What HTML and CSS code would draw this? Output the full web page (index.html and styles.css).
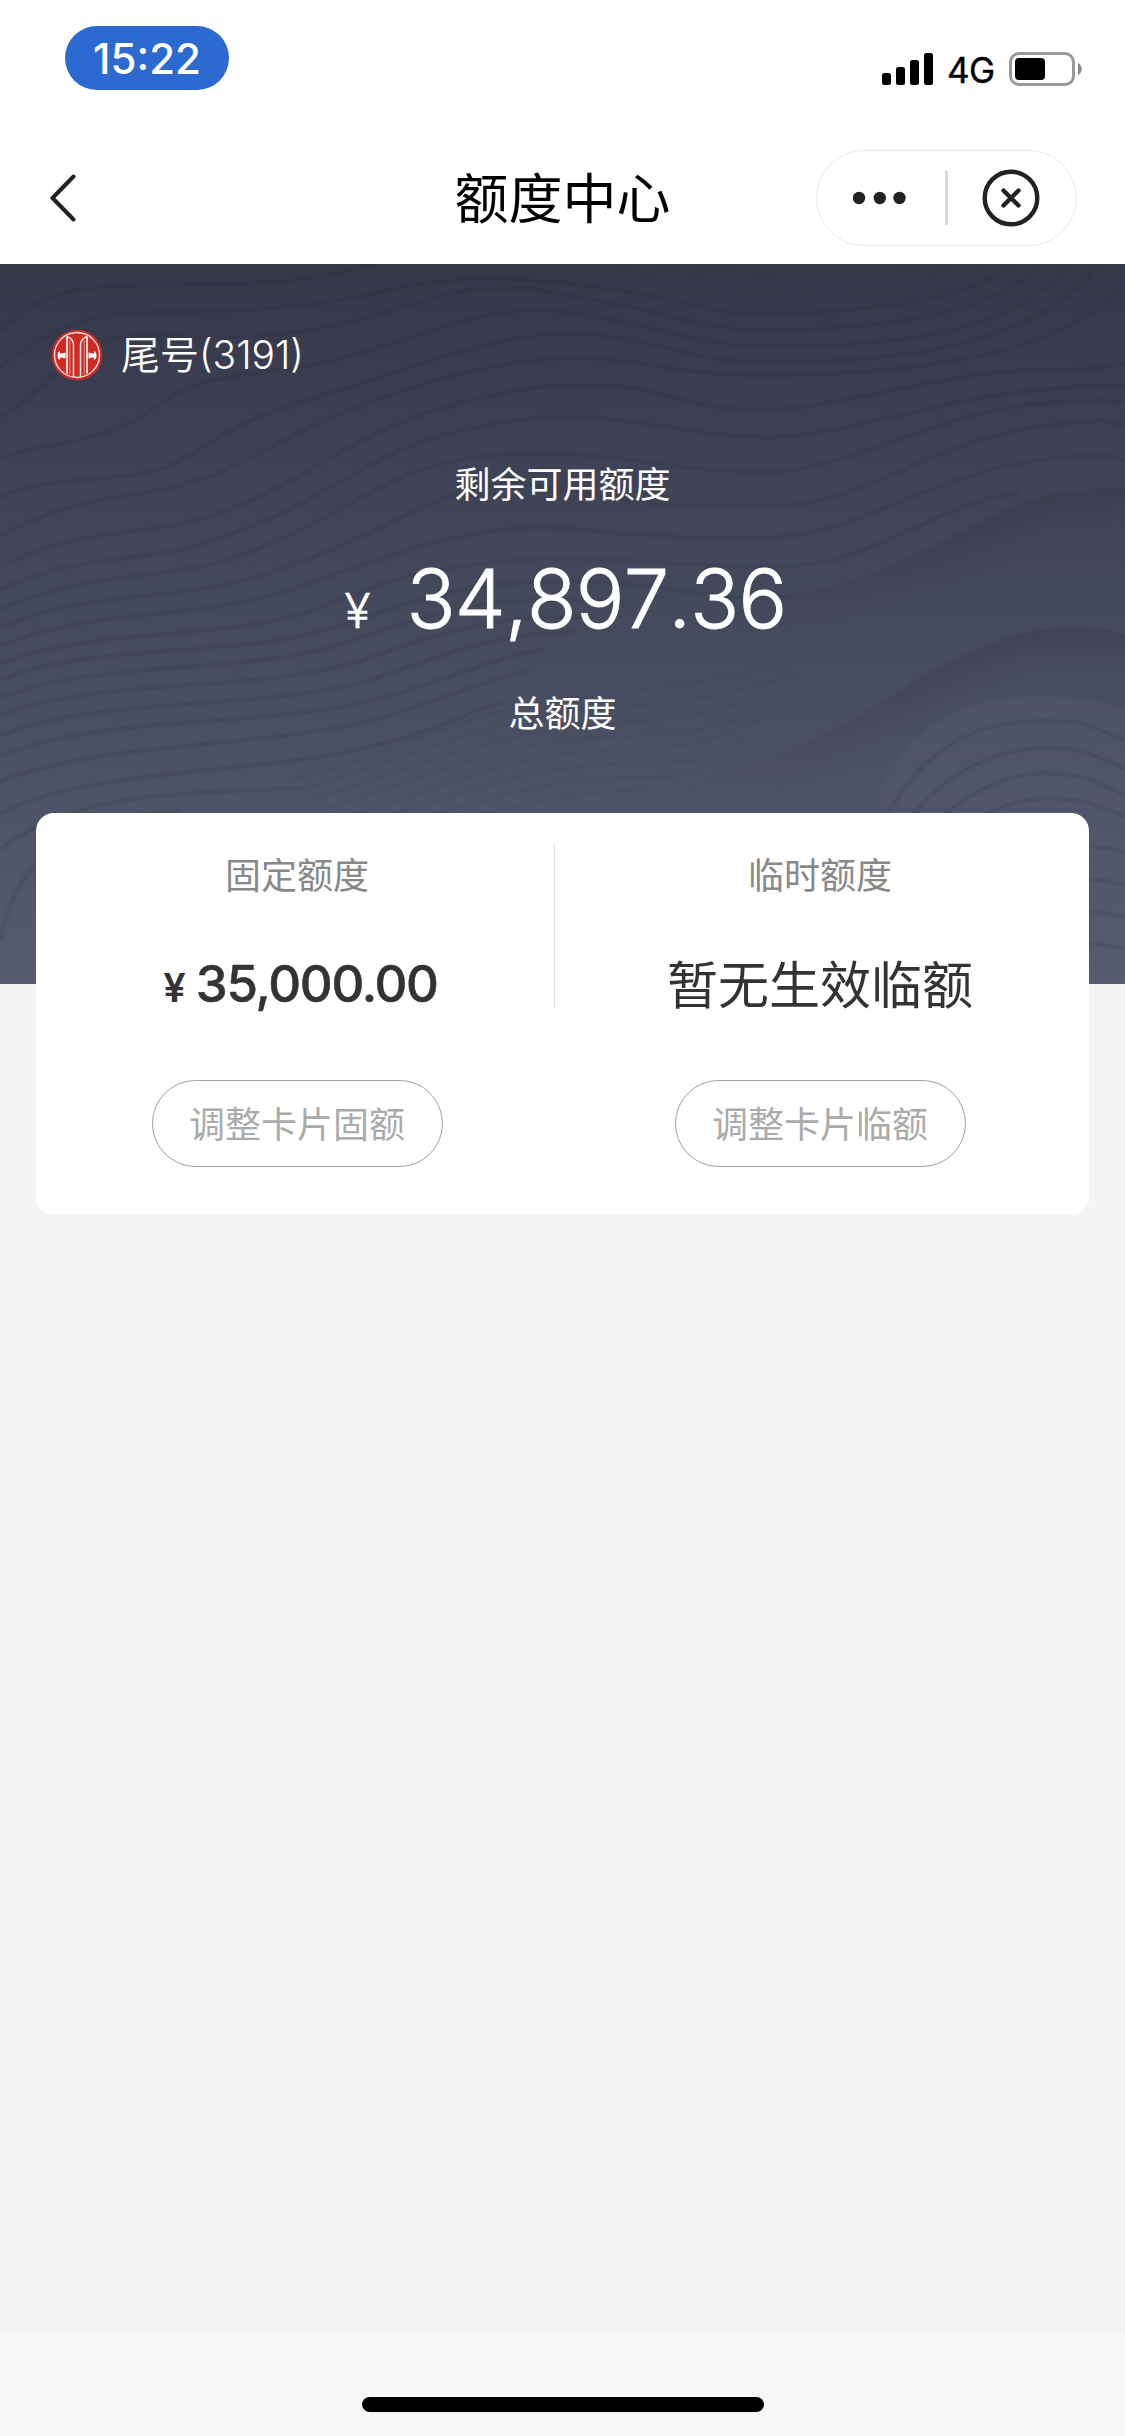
FILE: index.html
```html
<!DOCTYPE html>
<html lang="zh-CN">
<head>
<meta charset="utf-8">
<title>额度中心</title>
<link rel="stylesheet" href="styles.css">
</head>
<body>
<header class="top">
  <div class="status">
    <div class="time">15:22</div>
    <div class="status-right">
      <svg class="signal" viewBox="0 0 51 32"><rect y="20" width="9" height="12" rx="2.5"/><rect x="14" y="14" width="9" height="18" rx="2.5"/><rect x="28" y="7" width="9" height="25" rx="2.5"/><rect x="42" width="9" height="32" rx="2.5"/></svg>
      <span class="network">4G</span>
      <svg class="battery" viewBox="0 0 74 34"><rect x="1.5" y="1.5" width="63" height="31" rx="8.5" fill="none" stroke="#999" stroke-width="3"/><rect x="6" y="6" width="30" height="22" rx="4"/><path d="M69 11c5 2 5 10 0 12z" fill="#888"/></svg>
    </div>
  </div>
  <div class="nav">
    <svg class="back" viewBox="0 0 28 50"><path d="M25.500 3.500 4.500 25l21 21.500" fill="none" stroke="#222" stroke-width="4" stroke-linecap="round" stroke-linejoin="round"/></svg>
    <h1 class="title">额度中心</h1>
    <div class="capsule">
      <svg class="dots" viewBox="0 0 54 14"><g fill="#222"><circle cx="6" cy="7" r="6.2"/><circle cx="26.8" cy="7" r="6.2"/><circle cx="46.5" cy="7" r="6.2"/></g></svg>
      <span class="capsule-line"></span>
      <svg class="close" viewBox="0 0 58 58"><g fill="none" stroke="#222"><circle cx="29" cy="29" r="26.3" stroke-width="4.4"/><path d="m21.500 21.500 15 15m0-15-15 15" stroke-width="4.4" stroke-linecap="round"/></g></svg>
    </div>
  </div>
</header>

<main>
  <section class="hero">
    <svg class="waves" viewBox="0 11 1568 2016" preserveAspectRatio="none">
      <defs>
        <clipPath id="far"><path d="M1000 965C1180 930 1250 850 1330 770S1450 635 1568 640V2027H1000z"/></clipPath>
        <clipPath id="near"><path d="M900 1500C1080 1410 1180 1300 1256 1201S1450 980 1568 1048V2027H900z"/></clipPath>
        <linearGradient id="shade" gradientUnits="userSpaceOnUse" x1="960" y1="0" x2="1400" y2="0"><stop offset="0" stop-color="#30333f" stop-opacity="0"/><stop offset="1" stop-color="#30333f" stop-opacity=".26"/></linearGradient>
        <linearGradient id="hump" x1="0" y1="0" x2="0" y2="1"><stop offset="0" stop-color="#6b7288" stop-opacity=".14"/><stop offset="1" stop-color="#6b7288" stop-opacity=".03"/></linearGradient>
      </defs>
      <g clip-path="url(#far)"><path class="shade" stroke="url(#shade)" d="M1000 965C1180 930 1250 850 1330 770S1450 635 1568 640H1700"/></g>
      <g clip-path="url(#near)"><path class="shade" stroke="url(#shade)" d="M900 1500C1080 1410 1180 1300 1256 1201S1450 980 1568 1048L1700 1120"/></g>
      <path class="hump" fill="url(#hump)" d="M1216 1620C1215 1400 1300 1225 1440 1221C1490 1218 1530 1235 1600 1270V2040H1216z"/>
      <g class="lines">
        <path d="M0 200C50 100 90 75 200 70S400 80 520 11"/>
        <path d="M0 300C70 190 120 145 220 145S420 140 540 85S740 50 850 80S980 150 1060 150S1350 130 1410 11"/>
        <path d="M0 440C90 340 100 190 230 210S460 200 580 120S760 90 850 120S980 195 1060 195S1370 190 1450 11"/>
        <path d="M0 555C80 500 140 520 210 420S320 330 420 300S640 145 740 140S960 240 1060 240S1400 250 1490 11"/>
        <path d="M0 665C90 580 190 650 270 540S400 410 480 360S700 200 800 205S960 285 1060 285S1430 290 1530 11"/>
        <path d="M0 775C90 660 190 670 270 620S400 490 480 425S720 255 830 275S960 323 1060 323S1460 310 1560 80"/>
        <path d="M0 860C90 760 190 770 270 730S410 610 490 520S720 335 836 350S960 419 1060 419S1330 310 1430 310S1530 300 1568 290"/>
        <path d="M0 925C100 820 200 850 290 790S440 660 520 570S730 425 836 443S980 496 1070 496S1320 390 1420 370S1530 350 1568 350"/>
        <path d="M0 980C110 870 230 900 330 830S500 660 570 600S740 530 836 550S980 596 1080 592S1320 420 1450 402S1530 400 1568 400"/>
        <path d="M0 1030C120 920 250 960 370 880S550 720 630 660S760 635 850 665S1000 690 1100 685S1310 500 1450 466S1530 463 1568 463"/>
        <path d="M0 1080C130 970 280 1010 410 920S590 790 680 760S830 765 900 770S1020 790 1110 770S1320 590 1450 560S1530 558 1568 560"/>
        <path d="M0 1130C140 1020 330 1070 450 970S620 860 720 840S1000 870 1110 856S1310 680 1420 650"/>
        <path d="M0 1175C140 1065 340 1120 480 1020S680 900 800 900S1000 960 1100 942"/>
        <path d="M0 1225C150 1110 350 1170 500 1060S730 940 870 960"/>
        <path d="M0 1275C150 1160 370 1220 520 1110S720 1000 830 1000"/>
        <path d="M0 1330C160 1210 390 1270 540 1160S720 1050 800 1040"/>
        <path d="M0 1390C160 1260 390 1320 560 1210S700 1110 760 1090"/>
        <path d="M0 1460C150 1340 400 1370 550 1270S670 1180 740 1150"/>
        <path d="M0 1550C130 1420 350 1440 500 1370S620 1280 700 1240"/>
        <path d="M0 1650C100 1490 260 1490 420 1480"/>
        <path d="M0 1900C30 1650 100 1570 250 1540"/>
        <path d="M1235 1560C1290 1350 1370 1290 1450 1290S1520 1310 1568 1345"/>
        <path d="M1270 1560C1320 1430 1390 1370 1450 1367S1530 1390 1568 1425M1310 1560C1360 1480 1410 1435 1460 1437S1530 1460 1568 1500M1370 1560C1420 1490 1500 1490 1568 1560"/>
        <path d="M1500 1640Q1540 1640 1568 1660M1500 1740Q1540 1730 1568 1750M1500 1830Q1540 1820 1568 1840M1500 1920Q1540 1910 1568 1930"/>
      </g>
      <g class="fine">
        <path d="M860 20C970 90 1080 120 1180 115S1340 80 1370 11M910 11C1000 70 1100 90 1180 85S1300 60 1325 11M965 11C1060 50 1120 60 1180 55S1260 30 1280 11"/>
        <path d="M400 1460C560 1380 640 1260 820 1220S1020 1170 1110 1120M415 1485C570 1400 660 1290 830 1260S1020 1210 1110 1160M430 1510C580 1430 680 1320 840 1300S1020 1240 1100 1200M455 1535C600 1450 700 1340 850 1335S1010 1290 1080 1250M480 1560C620 1480 700 1380 860 1372S1010 1310 1060 1290M530 1560C660 1490 740 1410 880 1410S1000 1370 1040 1340M590 1560C700 1500 770 1450 880 1450S960 1420 1000 1400M660 1560C740 1510 820 1490 900 1480"/>
      </g>
    </svg>
    <div class="bank">
      <svg class="bank-logo" viewBox="0 0 52 52"><circle cx="26" cy="26" r="25.3" fill="#cf2a24"/><g fill="none" stroke="#fff" stroke-opacity=".88"><circle cx="26" cy="26" r="22.500" stroke-width="1.3"/><path d="M16 7.500v37M36 7.500v37" stroke-width="1.8"/><path d="M16 7.500q6.500 2 6.500 9v31.500M36 7.500q-6.500 2-6.500 9v31.500" stroke-width="1.500"/><path d="M18.800 11v35M33.200 11v35" stroke-width="1" stroke-opacity=".5"/></g><path d="M9 22v2.500q3 0 5.500-1v6q-2.500-1-5.500-1V31q-2.500-1-2.500-4.500T9 22zm34 0v2.500q-3 0-5.500-1v6q2.500-1 5.500-1V31q2.500-1 2.500-4.500T43 22z" fill="#fff"/></svg>
      <span>尾号(3191)</span>
    </div>
    <p class="label label-available">剩余可用额度</p>
    <p class="available"><span class="available-sign">¥</span><span class="available-value">34,897.36</span></p>
    <p class="label label-total">总额度</p>
  </section>

  <section class="card">
    <div class="limit">
      <h2 class="limit-name">固定额度</h2>
      <p class="limit-value"><span class="limit-sign">¥</span><span class="limit-number">35,000.00</span></p>
      <button class="adjust">调整卡片固额</button>
    </div>
    <span class="card-line"></span>
    <div class="limit">
      <h2 class="limit-name">临时额度</h2>
      <p class="limit-value limit-none">暂无生效临额</p>
      <button class="adjust">调整卡片临额</button>
    </div>
  </section>
</main>

<footer class="home"><span class="home-bar"></span></footer>
</body>
</html>
```
FILE: styles.css
```css
* { box-sizing: border-box; }
body {
  margin: 0;
  width: 1125px;
  height: 2436px;
  display: flex;
  flex-direction: column;
  background: #f4f4f4;
  font-family: Inter, "Noto Sans CJK SC", sans-serif;
  color: #333;
}
h1, h2, p { margin: 0; font-weight: 400; }
svg { display: block; flex: none; }

.top { height: 264px; background: #fff; }
.status {
  height: 132px;
  padding: 26px 42px 0 65px;
  display: flex;
  justify-content: space-between;
}
.time {
  width: 164px;
  height: 64px;
  border-radius: 32px;
  background: #2c69d1;
  color: #fff;
  font-size: 42px;
  font-weight: 500;
  line-height: 65px;
  text-align: center;
}
.status-right { display: flex; height: 86px; align-items: center; }
.signal { width: 51px; height: 32px; }
.network { width: 48px; margin: 2px 14px 0 14px; font-size: 35px; line-height: 40px; letter-spacing: -.5px; color: #000; -webkit-text-stroke: .4px; white-space: nowrap; }
.battery { width: 74px; height: 34px; }

.nav {
  height: 132px;
  padding: 0 48px;
  display: grid;
  grid-template-columns: 1fr auto 1fr;
  align-items: center;
}
.back { width: 28px; height: 50px; }
.title { padding-top: 3px; font-size: 54px; line-height: 80px; color: #000; }
.capsule {
  justify-self: end;
  width: 261px;
  height: 96px;
  padding: 0 36px;
  border: 1.5px solid #e8e8e8;
  border-radius: 48px;
  display: flex;
  align-items: center;
}
.dots { width: 54px; height: 14px; }
.capsule-line { width: 3px; height: 54px; margin-left: 38px; background: #d8d8d8; }
.close { width: 58px; height: 58px; margin-left: 34px; }

.hero {
  position: relative;
  height: 720px;
  padding-top: 64px;
  background: linear-gradient(#343849, #44485b 45%, #565b6f);
  color: #fff;
  text-align: center;
}
.waves { position: absolute; inset: 0; width: 1125px; height: 720px; }
.lines path, .fine path { fill: none; vector-effect: non-scaling-stroke; }
.lines { stroke: #252b3c; stroke-opacity: .14; stroke-width: 4; filter: blur(1.8px); }
.fine { stroke: #252b3c; stroke-opacity: .06; stroke-width: 3; filter: blur(1.5px); }
.shade { fill: none; stroke-width: 90; filter: blur(26px); }
.hump { filter: blur(4px); }
.bank {
  position: relative;
  height: 54px;
  padding-left: 51px;
  display: flex;
  align-items: center;
  gap: 18px;
  font-size: 39px;
  font-weight: 350;
  line-height: 54px;
}
.bank-logo { width: 52px; height: 52px; }
.label { position: relative; font-size: 36px; line-height: 50px; }
.label-available { margin-top: 78px; }
.available {
  position: relative;
  height: 100px;
  margin-top: 39px;
  padding-left: 6px;
  display: flex;
  justify-content: center;
  align-items: baseline;
  gap: 36px;
  font-weight: 300;
  line-height: 100px;
}
.available-sign { font-size: 48px; -webkit-text-stroke: .5px; }
.available-value { font-size: 81px; font-kerning: none; letter-spacing: -.8px; -webkit-text-stroke: .9px; }
.label-total { margin-top: 40px; }

.card {
  position: relative;
  width: 1053px;
  height: 402px;
  margin: -171px 36px 0;
  border-radius: 18px;
  background: #fff;
  display: flex;
}
.limit {
  width: 522px;
  padding-top: 37px;
  display: flex;
  flex-direction: column;
  align-items: center;
}
.card-line { width: 1px; height: 165px; margin: 30px 4px 0 -4px; background: #e2e2e2; }
.limit-name { font-size: 36px; line-height: 52px; color: #888; }
.limit-value { display: flex; align-items: baseline; height: 76px; margin-top: 44px; font-size: 51px; line-height: 76px; }
.limit-none { padding-top: 2px; }
.limit-sign { margin: 0 10px 0 7px; font-size: 40px; font-weight: 600; }
.limit-number { font-weight: 500; letter-spacing: -1.3px; -webkit-text-stroke: .5px; }
.adjust {
  width: 291px;
  height: 87px;
  margin-top: 58px;
  padding: 0 0 4px;
  border: 1px solid #a0a0a0;
  border-radius: 44px;
  background: none;
  font: inherit;
  font-size: 36px;
  color: #aaa;
}

.home {
  height: 103px;
  margin-top: auto;
  padding-top: 64px;
  background: #f7f7f7;
}
.home-bar { display: block; width: 402px; height: 15px; margin: 0 auto; border-radius: 8px; background: #000; }
```
